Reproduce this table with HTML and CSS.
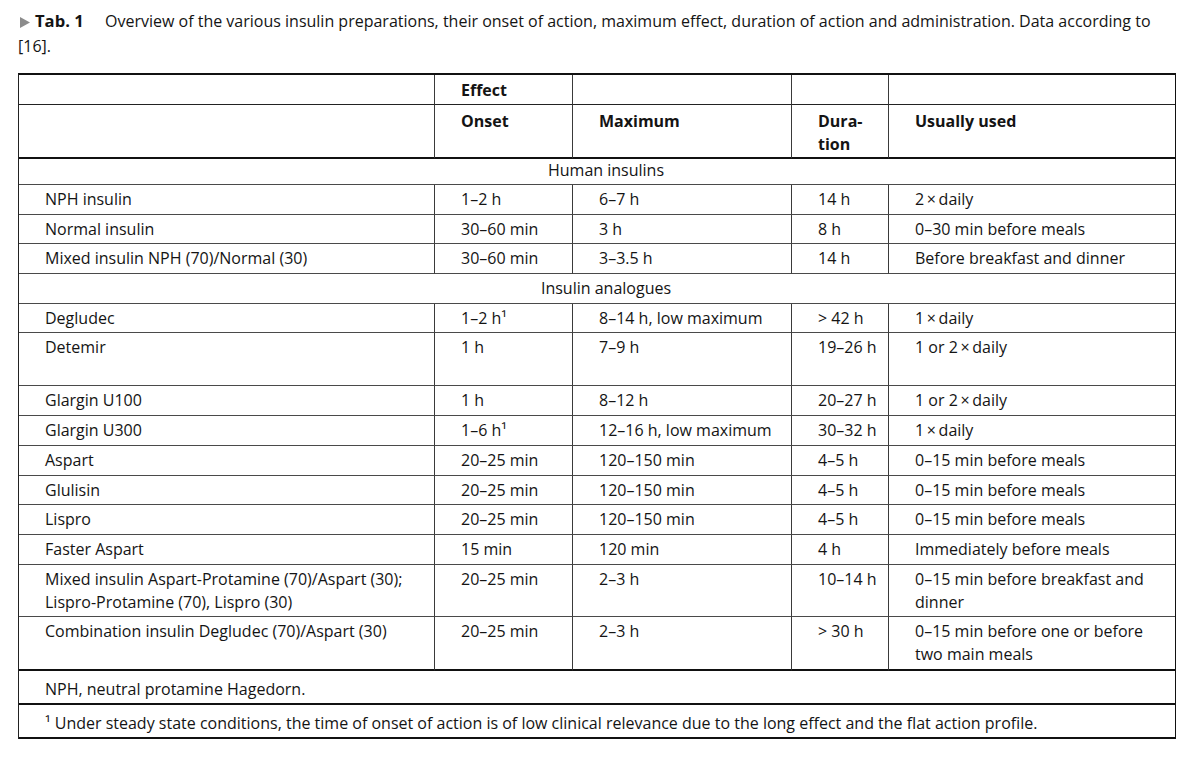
FILE: index.html
```html
<!DOCTYPE html>
<html lang="en">
<head>
<meta charset="utf-8">
<title>Tab. 1 Insulin preparations</title>
<link rel="stylesheet" href="styles.css">
</head>
<body>
<p class="caption"><span class="label"><svg class="tri" width="10" height="11" viewBox="0 0 10 11" aria-hidden="true"><path d="M0 0 L10 5.5 L0 11 Z" fill="#8c8c8c"/></svg><b>Tab. 1</b></span>Overview of the various insulin preparations, their onset of action, maximum effect, duration of action and administration. Data according to [16].</p>

<table class="tbl">
  <colgroup>
    <col class="c1"><col class="c2"><col class="c3"><col class="c4"><col class="c5">
  </colgroup>
  <thead>
    <tr class="h1">
      <th></th><th>Effect</th><th></th><th></th><th class="last"></th>
    </tr>
    <tr class="h2">
      <th></th><th>Onset</th><th>Maximum</th><th>Dura-<br>tion</th><th class="last">Usually used</th>
    </tr>
  </thead>
  <tbody>
    <tr class="sec first"><td colspan="5" class="last">Human insulins</td></tr>
    <tr><td>NPH insulin</td><td>1–2 h</td><td>6–7 h</td><td>14 h</td><td class="last">2&#8201;×&#8201;daily</td></tr>
    <tr><td>Normal insulin</td><td>30–60 min</td><td>3 h</td><td>8 h</td><td class="last">0–30 min before meals</td></tr>
    <tr><td>Mixed insulin NPH (70)/Normal (30)</td><td>30–60 min</td><td>3–3.5 h</td><td>14 h</td><td class="last">Before breakfast and dinner</td></tr>
    <tr class="sec"><td colspan="5" class="last">Insulin analogues</td></tr>
    <tr><td>Degludec</td><td>1–2 h¹</td><td>8–14 h, low maximum</td><td>&gt; 42 h</td><td class="last">1&#8201;×&#8201;daily</td></tr>
    <tr class="tall"><td>Detemir</td><td>1 h</td><td>7–9 h</td><td>19–26 h</td><td class="last">1 or 2&#8201;×&#8201;daily</td></tr>
    <tr><td>Glargin U100</td><td>1 h</td><td>8–12 h</td><td>20–27 h</td><td class="last">1 or 2&#8201;×&#8201;daily</td></tr>
    <tr><td>Glargin U300</td><td>1–6 h¹</td><td>12–16 h, low maximum</td><td>30–32 h</td><td class="last">1&#8201;×&#8201;daily</td></tr>
    <tr><td>Aspart</td><td>20–25 min</td><td>120–150 min</td><td>4–5 h</td><td class="last">0–15 min before meals</td></tr>
    <tr><td>Glulisin</td><td>20–25 min</td><td>120–150 min</td><td>4–5 h</td><td class="last">0–15 min before meals</td></tr>
    <tr><td>Lispro</td><td>20–25 min</td><td>120–150 min</td><td>4–5 h</td><td class="last">0–15 min before meals</td></tr>
    <tr><td>Faster Aspart</td><td>15 min</td><td>120 min</td><td>4 h</td><td class="last">Immediately before meals</td></tr>
    <tr><td>Mixed insulin Aspart-Protamine (70)/Aspart (30);<br>Lispro-Protamine (70), Lispro (30)</td><td>20–25 min</td><td>2–3 h</td><td>10–14 h</td><td class="last">0–15 min before breakfast and dinner</td></tr>
    <tr class="end"><td>Combination insulin Degludec (70)/Aspart (30)</td><td>20–25 min</td><td>2–3 h</td><td>&gt; 30 h</td><td class="last">0–15 min before one or before two main meals</td></tr>
  </tbody>
  <tfoot>
    <tr class="f1"><td colspan="5" class="last">NPH, neutral protamine Hagedorn.</td></tr>
    <tr class="f2"><td colspan="5" class="last">¹ Under steady state conditions, the time of onset of action is of low clinical relevance due to the long effect and the flat action profile.</td></tr>
  </tfoot>
</table>
</body>
</html>
```
FILE: styles.css
```css
html, body {
  margin: 0;
  padding: 0;
  background: #fff;
}
body {
  font-family: "Open Sans", "Noto Sans", sans-serif;
  color: #141414;
  font-size: 16px;
}
.caption {
  margin: 8px 24px 0 18px;
  line-height: 25px;
}
.label {
  display: inline-block;
  width: 87px;
}
.tri {
  display: inline-block;
  margin-left: 2px;
  margin-right: 5px;
  vertical-align: -1px;
}
.label b {
  font-weight: 700;
  font-size: 16.6px;
}
.tbl {
  margin: 14px 0 0 18px;
  width: 1158px;
  border-collapse: separate;
  border-spacing: 0;
  table-layout: fixed;
  border-top: 2px solid #111;
  border-left: 1px solid #222;
  border-right: 1.5px solid #111;
  line-height: 23px;
}
.c1 { width: 416px; }
.c2 { width: 138px; }
.c3 { width: 219px; }
.c4 { width: 97px; }
.c5 { width: auto; }
th, td {
  text-align: left;
  vertical-align: top;
  padding: 3px 6px 2.7px 26px;
  border-bottom: 1px solid #4a4a4a;
  border-right: 1px solid #3a3a3a;
  font-weight: 400;
}
th {
  font-weight: 700;
}
.last {
  border-right: none;
}
.h1 th {
  padding: 4px 6px 2px 26px;
  border-bottom: 1px solid #222;
}
.h2 th {
  padding: 5px 6px 1px 26px;
  border-bottom: 2px solid #111;
}
.sec td {
  text-align: center;
  padding: 3px 0 2.7px 18px;
}
.sec.first td {
  padding: 0 0 2px 18px;
}
.tall td {
  padding-bottom: 26px;
}
.end td {
  border-bottom: 2px solid #111;
}
tfoot td {
  padding: 7px 6px 2px 26px;
  border-bottom: 2px solid #111;
}
.f2 td {
  padding: 7px 6px 2px 26px;
}
```
